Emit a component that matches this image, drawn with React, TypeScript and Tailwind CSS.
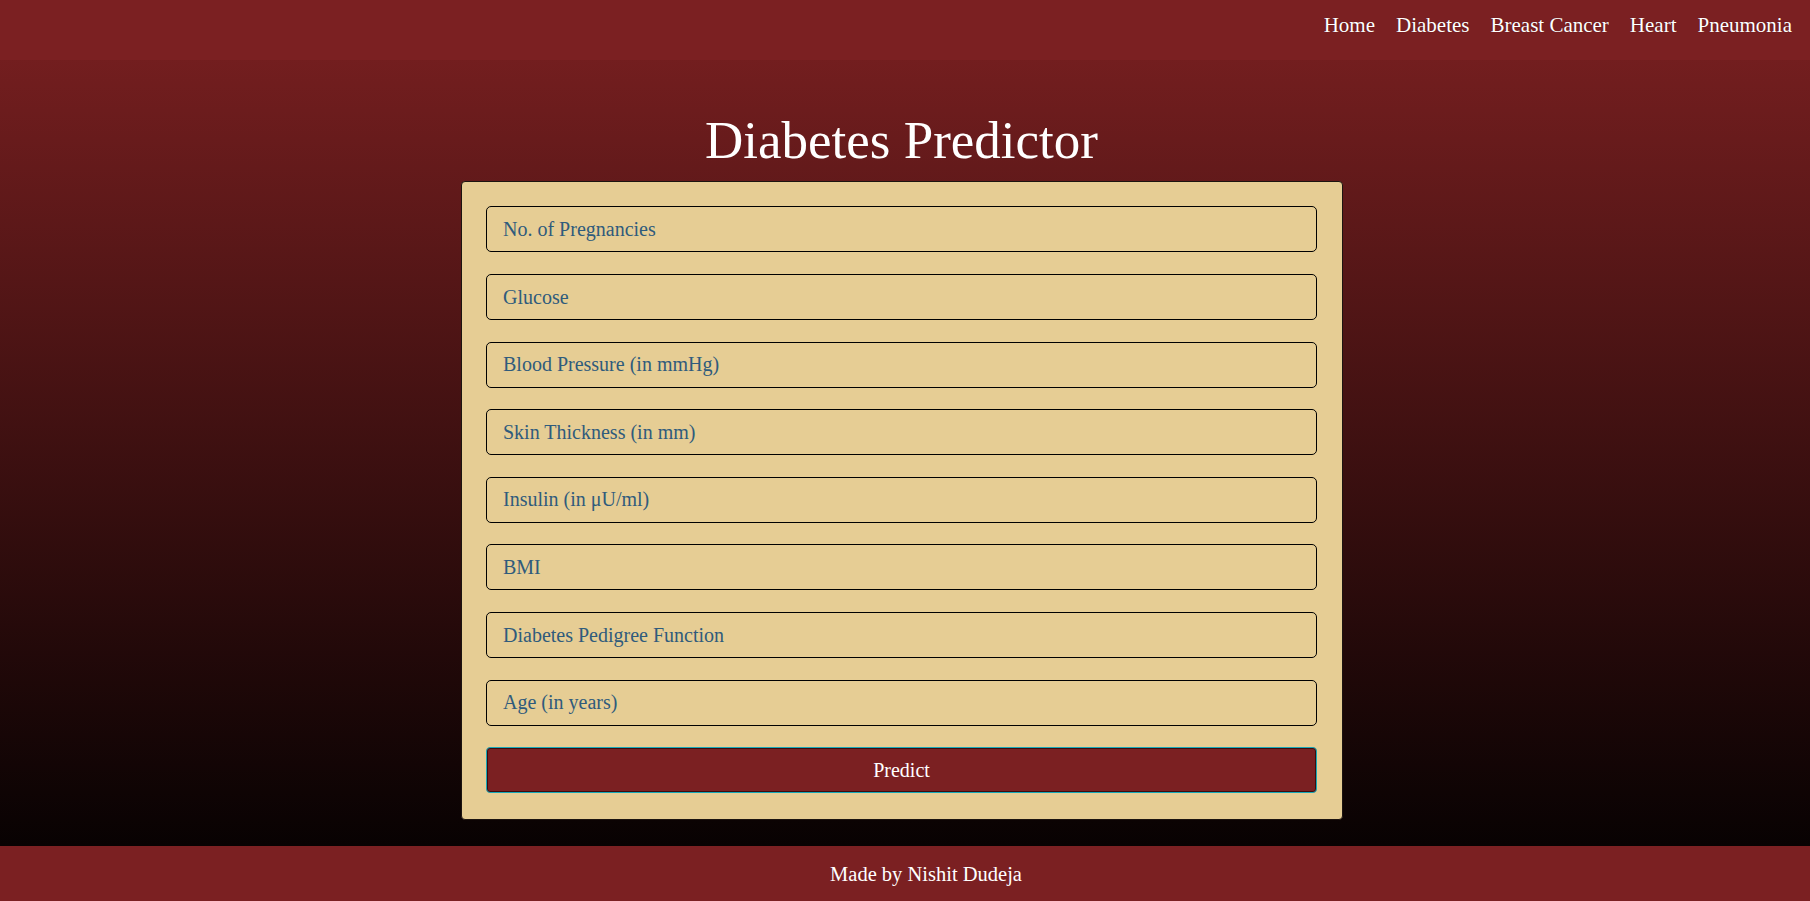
import React from "react";

const fields = [
  "No. of Pregnancies",
  "Glucose",
  "Blood Pressure (in mmHg)",
  "Skin Thickness (in mm)",
  "Insulin (in μU/ml)",
  "BMI",
  "Diabetes Pedigree Function",
  "Age (in years)",
];

const links = ["Home", "Diabetes", "Breast Cancer", "Heart", "Pneumonia"];

export default function App() {
  return (
    <div
      className="min-h-screen flex flex-col bg-[linear-gradient(#7b2021,#000000)]"
      style={{ fontFamily: '"Liberation Serif", "Times New Roman", serif' }}
    >
      <nav className="h-[60px] shrink-0 bg-[#7b2022] flex justify-end items-start pt-[15px] pr-[18px] gap-[21px]">
        {links.map((l) => (
          <a
            key={l}
            href="#"
            className="text-[21px] leading-none text-white [text-shadow:0_0_1px_rgba(0,0,0,0.4)]"
          >
            {l}
          </a>
        ))}
      </nav>

      <main className="flex-1 flex flex-col items-center pt-[53.6px] pb-[26px] pr-[7px]">
        <h1 className="text-[53px] leading-none text-white mb-[14.4px]">
          Diabetes Predictor
        </h1>
        <form
          className="w-[882px] bg-[#e6cd94] border border-[#1c1410] rounded-[4px] px-[24.5px] pt-[24.5px] pb-[25.5px] flex flex-col gap-[21.6px]"
          onSubmit={(e) => e.preventDefault()}
        >
          {fields.map((f) => (
            <input
              key={f}
              type="text"
              placeholder={f}
              className="h-[46px] w-full bg-[#e6cd94] border border-black rounded-[5px] px-[16px] text-[20px] text-[#2c5a7a] placeholder:text-[#2f5b7c] outline-none"
              style={{ fontFamily: '"Liberation Serif", "Times New Roman", serif' }}
            />
          ))}
          <button
            type="submit"
            className="h-[46px] w-full bg-[#7b2022] border border-[#17a8b8] shadow-[inset_0_0_0_1px_#3d0c0d] rounded-[4px] text-white text-[20px]"
            style={{ fontFamily: '"Liberation Serif", "Times New Roman", serif' }}
          >
            Predict
          </button>
        </form>
      </main>

      <footer className="h-[57px] shrink-0 bg-[#7b2022] flex items-center justify-center pl-[42px]">
        <span className="text-[20.5px] text-white leading-none">Made by Nishit Dudeja</span>
      </footer>
    </div>
  );
}
